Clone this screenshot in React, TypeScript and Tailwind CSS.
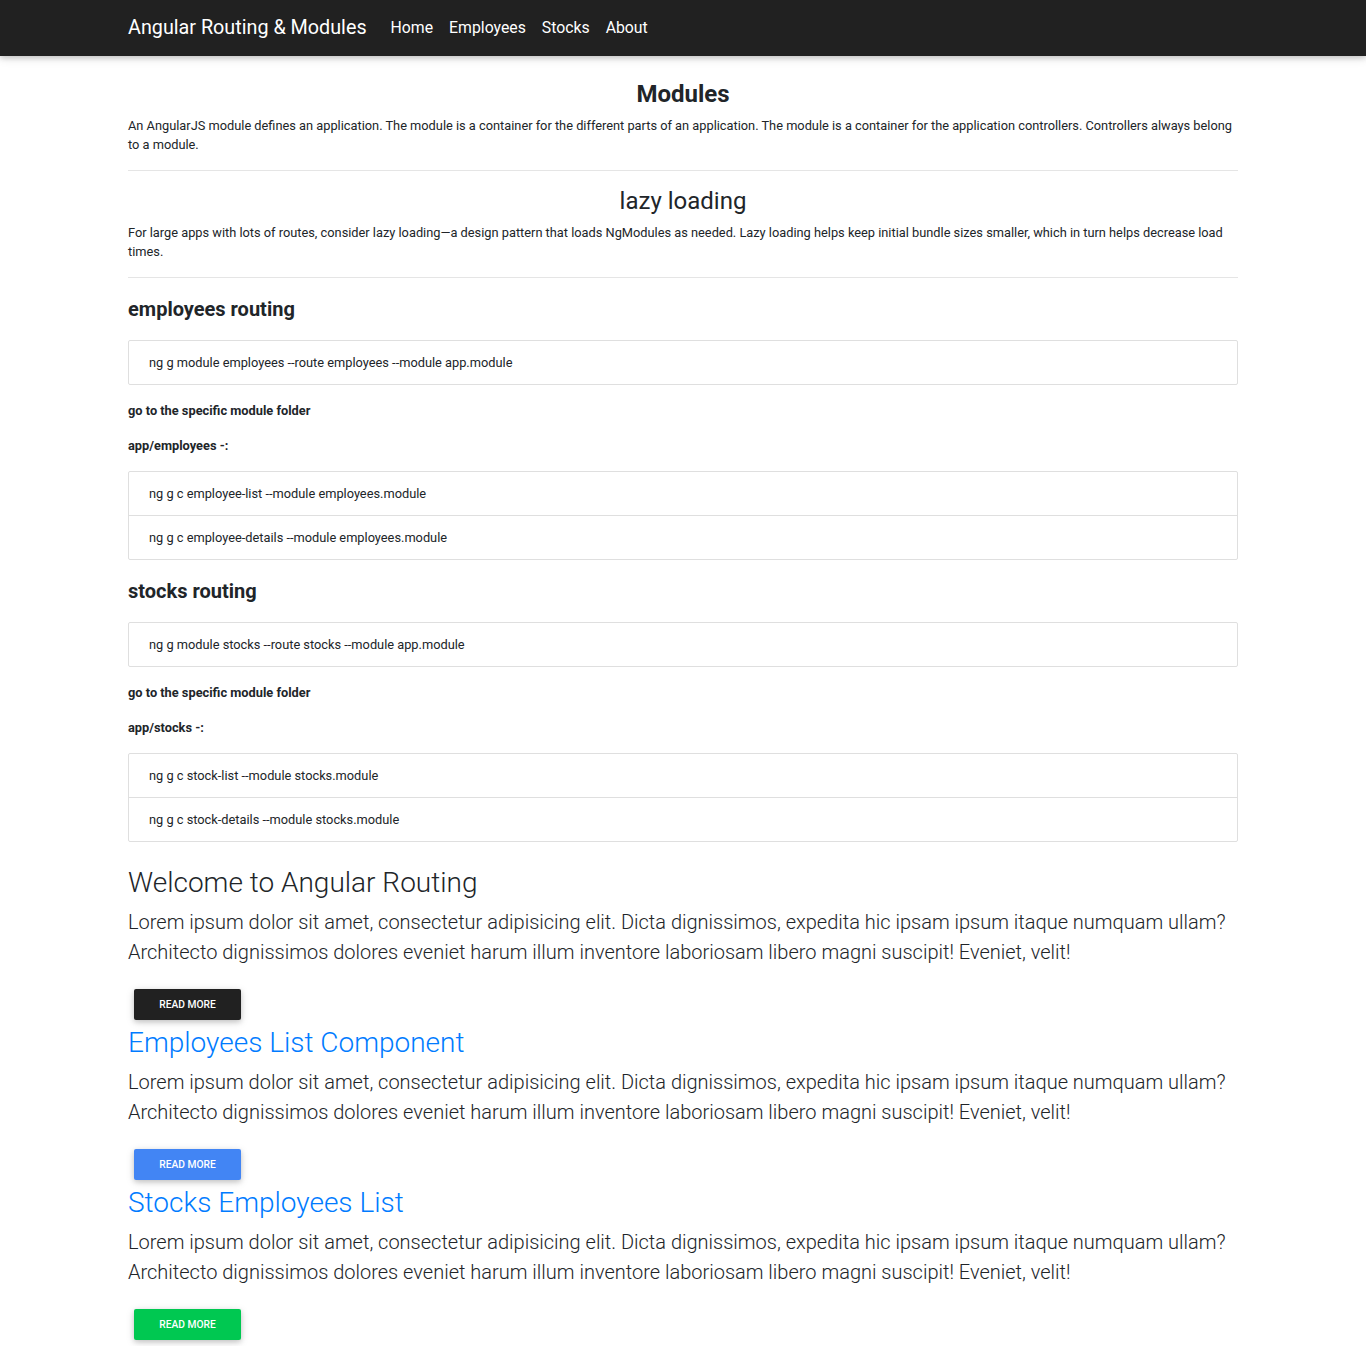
import React from "react";

const font = { fontFamily: "Roboto, 'Noto Sans', sans-serif" };

function ListBox({ items }: { items: string[] }) {
  return (
    <div className="flex flex-col border border-[rgba(0,0,0,0.125)] rounded-[2px]">
      {items.map((t, i) => (
        <div
          key={i}
          className={
            "px-5 flex items-center text-[12.8px] text-[#212529] " +
            (i > 0 ? "border-t border-[rgba(0,0,0,0.125)] h-[44px]" : "h-[43px]")
          }
        >
          {t}
        </div>
      ))}
    </div>
  );
}

function Card({
  title,
  titleClass,
  btnClass,
}: {
  title: string;
  titleClass: string;
  btnClass: string;
}) {
  return (
    <div className="flex flex-col">
      <h2 className={"text-[28px] font-light leading-[34px] " + titleClass}>{title}</h2>
      <p className="text-[20px] font-light leading-[30px] text-[#212529] mt-[7px]">
        Lorem ipsum dolor sit amet, consectetur adipisicing elit. Dicta dignissimos, expedita hic ipsam ipsum itaque numquam ullam? Architecto dignissimos dolores eveniet harum illum inventore laboriosam libero magni suscipit! Eveniet, velit!
      </p>
      <div className="mt-[22px] mb-[6px]">
        <button
          className={
            "ml-[6px] w-[107px] h-[31px] rounded-[2px] text-white text-[10.24px] font-medium uppercase shadow-[0_2px_5px_0_rgba(0,0,0,0.16),0_2px_10px_0_rgba(0,0,0,0.12)] " +
            btnClass
          }
        >
          Read More
        </button>
      </div>
    </div>
  );
}

function Routing({
  title,
  cmd,
  folder,
  items,
}: {
  title: string;
  cmd: string;
  folder: string;
  items: string[];
}) {
  return (
    <div className="flex flex-col">
      <h4 className="text-[20px] font-bold leading-[24px] text-[#212529]">{title}</h4>
      <div className="mt-[19px]">
        <ListBox items={[cmd]} />
      </div>
      <p className="mt-[16px] text-[12.8px] font-bold leading-[19px] text-[#212529]">go to the specific module folder</p>
      <p className="mt-[16px] text-[12.8px] font-bold leading-[19px] text-[#212529]">{folder}</p>
      <div className="mt-[16px]">
        <ListBox items={items} />
      </div>
    </div>
  );
}

export default function App() {
  return (
    <div className="min-h-[1346px] bg-white" style={font}>
      <nav className="h-14 bg-[#212121] shadow-[0_2px_5px_0_rgba(0,0,0,0.16),0_2px_10px_0_rgba(0,0,0,0.12)] relative z-10">
        <div className="w-[1110px] mx-auto h-full flex items-center">
          <span className="text-[19.75px] text-white mr-4">Angular Routing &amp; Modules</span>
          <div className="flex items-center text-[15.8px] text-white">
            <span className="px-2">Home</span>
            <span className="px-2">Employees</span>
            <span className="px-2">Stocks</span>
            <span className="px-2">About</span>
          </div>
        </div>
      </nav>
      <main className="w-[1110px] mx-auto pt-[24px] text-[#212529]">
        <h3 className="text-[24px] font-bold leading-[29px] text-center">Modules</h3>
        <p className="mt-[7px] text-[12.8px] leading-[19px]">
          An AngularJS module defines an application. The module is a container for the different parts of an application. The module is a container for the application controllers. Controllers always belong to a module.
        </p>
        <hr className="mt-[16px] border-t border-[rgba(0,0,0,0.1)]" />
        <h3 className="mt-[16px] text-[24px] font-normal leading-[29px] text-center">lazy loading</h3>
        <p className="mt-[7px] text-[12.8px] leading-[19px]">
          For large apps with lots of routes, consider lazy loading—a design pattern that loads NgModules as needed. Lazy loading helps keep initial bundle sizes smaller, which in turn helps decrease load times.
        </p>
        <hr className="mt-[16px] border-t border-[rgba(0,0,0,0.1)]" />
        <div className="mt-[19px]">
          <Routing
            title="employees routing"
            cmd="ng g module employees --route employees --module app.module"
            folder="app/employees -:"
            items={[
              "ng g c employee-list --module employees.module",
              "ng g c employee-details --module employees.module",
            ]}
          />
        </div>
        <div className="mt-[19px]">
          <Routing
            title="stocks routing"
            cmd="ng g module stocks --route stocks --module app.module"
            folder="app/stocks -:"
            items={[
              "ng g c stock-list --module stocks.module",
              "ng g c stock-details --module stocks.module",
            ]}
          />
        </div>
        <div className="mt-[24px] flex flex-col">
          <Card title="Welcome to Angular Routing" titleClass="text-[#212529]" btnClass="bg-[#212121]" />
          <Card title="Employees List Component" titleClass="text-[#007bff]" btnClass="bg-[#4285f4]" />
          <Card title="Stocks Employees List" titleClass="text-[#007bff]" btnClass="bg-[#00c851]" />
        </div>
      </main>
    </div>
  );
}
